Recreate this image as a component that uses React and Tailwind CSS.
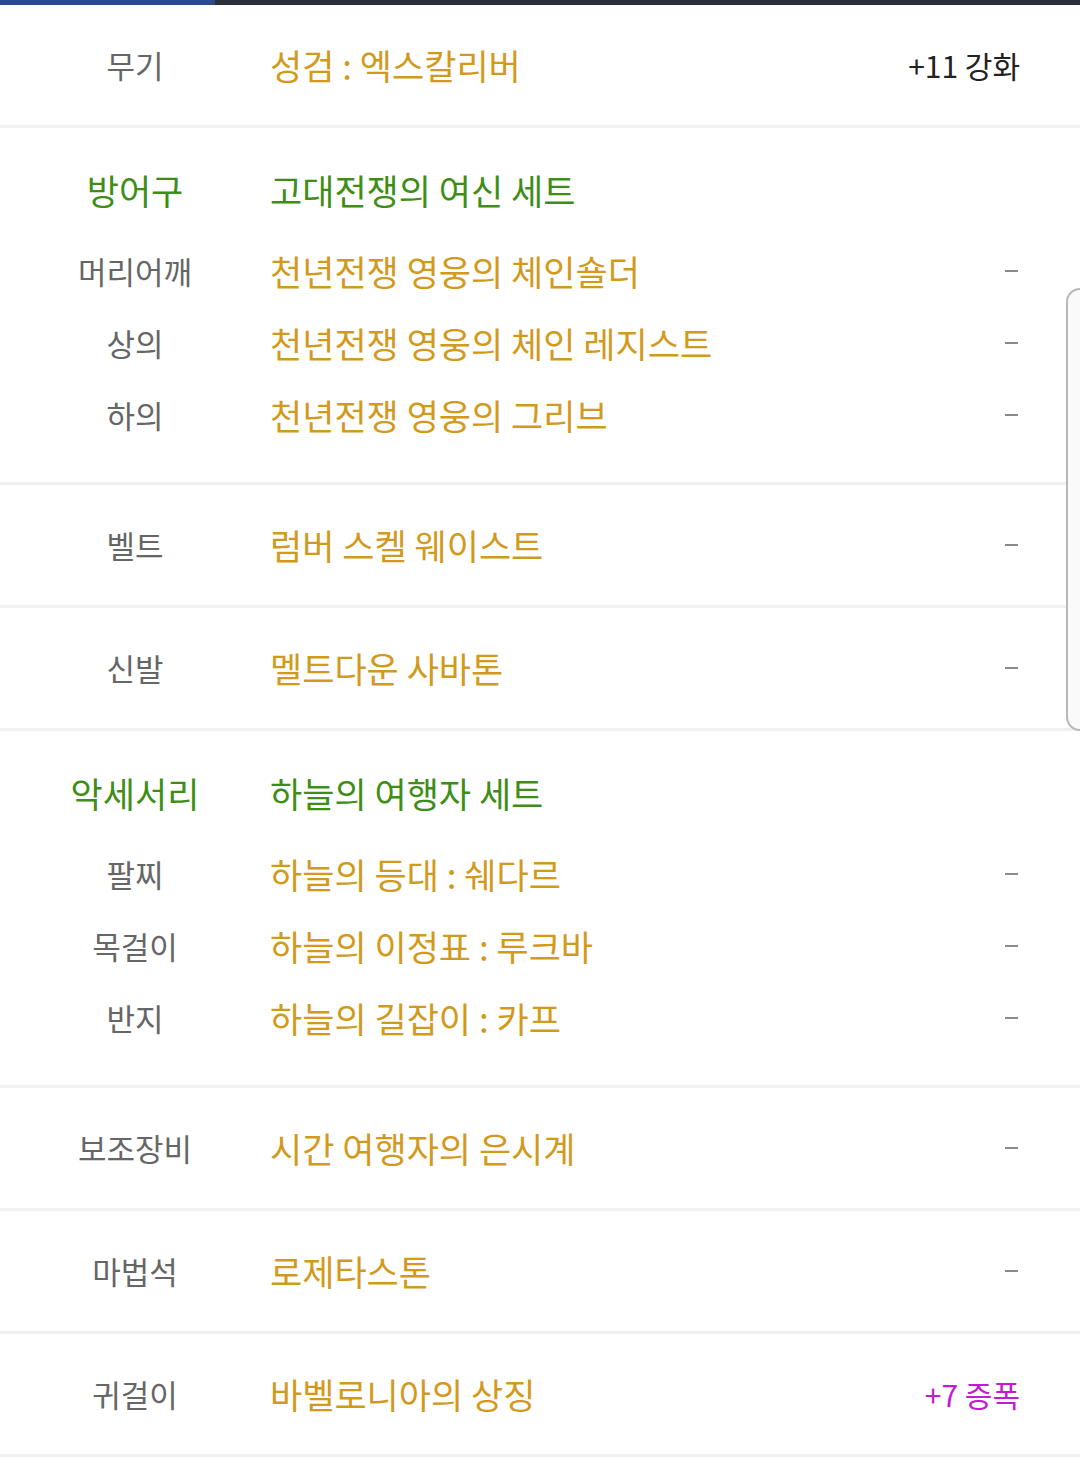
import React from 'react';

const font = { fontFamily: '"Noto Sans CJK KR", "Noto Sans", sans-serif' };

const Dash = () => <div className="w-[13px] h-[2px] bg-[#8a8a8a]" />;

const Row = ({ label, name, right, tall }) => (
  <div className={`flex items-center ${tall ? 'h-[120px]' : 'h-[72px]'}`}>
    <div className="w-[270px] text-center text-[31px] text-[#666666]">{label}</div>
    <div className="flex-1 text-[35px] text-[#d29a1c]">{name}</div>
    <div className="pr-[62px] flex items-center">{right ?? <Dash />}</div>
  </div>
);

const SetSection = ({ title, setName, items }) => (
  <div className="pt-[26px] pb-[31px] border-b-[3px] border-[#f0f0f0]">
    <div className="flex items-center h-[72px] mb-[9px]">
      <div className="w-[270px] text-center text-[35px] text-[#3e8e16]">{title}</div>
      <div className="flex-1 text-[35px] text-[#3e8e16]">{setName}</div>
    </div>
    {items.map((it) => (
      <Row key={it.label} label={it.label} name={it.name} />
    ))}
  </div>
);

const Single = ({ label, name, right }) => (
  <div className="border-b-[3px] border-[#f0f0f0]">
    <Row tall label={label} name={name} right={right} />
  </div>
);

export default function App() {
  return (
    <div className="relative w-[1080px] h-[1459px] bg-white overflow-hidden" style={font}>
      <div className="flex h-[5px]">
        <div className="w-[215px] bg-[#2c4b8c]" />
        <div className="flex-1 bg-[#2b2f3b]" />
      </div>

      <Single
        label="무기"
        name="성검 : 엑스칼리버"
        right={<span className="mr-[-2px] text-[30px] text-[#222222]">+11 강화</span>}
      />

      <SetSection
        title="방어구"
        setName="고대전쟁의 여신 세트"
        items={[
          { label: '머리어깨', name: '천년전쟁 영웅의 체인숄더' },
          { label: '상의', name: '천년전쟁 영웅의 체인 레지스트' },
          { label: '하의', name: '천년전쟁 영웅의 그리브' },
        ]}
      />

      <Single label="벨트" name="럼버 스켈 웨이스트" />
      <Single label="신발" name="멜트다운 사바톤" />

      <SetSection
        title="악세서리"
        setName="하늘의 여행자 세트"
        items={[
          { label: '팔찌', name: '하늘의 등대 : 쉐다르' },
          { label: '목걸이', name: '하늘의 이정표 : 루크바' },
          { label: '반지', name: '하늘의 길잡이 : 카프' },
        ]}
      />

      <Single label="보조장비" name="시간 여행자의 은시계" />
      <Single label="마법석" name="로제타스톤" />
      <Single
        label="귀걸이"
        name="바벨로니아의 상징"
        right={<span className="mr-[-2px] text-[30px] text-[#c41ad0]">+7 증폭</span>}
      />

      <div className="absolute left-[1066px] top-[288px] w-[30px] h-[443px] rounded-[14px] border-2 border-[#b8b8b8] bg-[#fafafa]" />
    </div>
  );
}
